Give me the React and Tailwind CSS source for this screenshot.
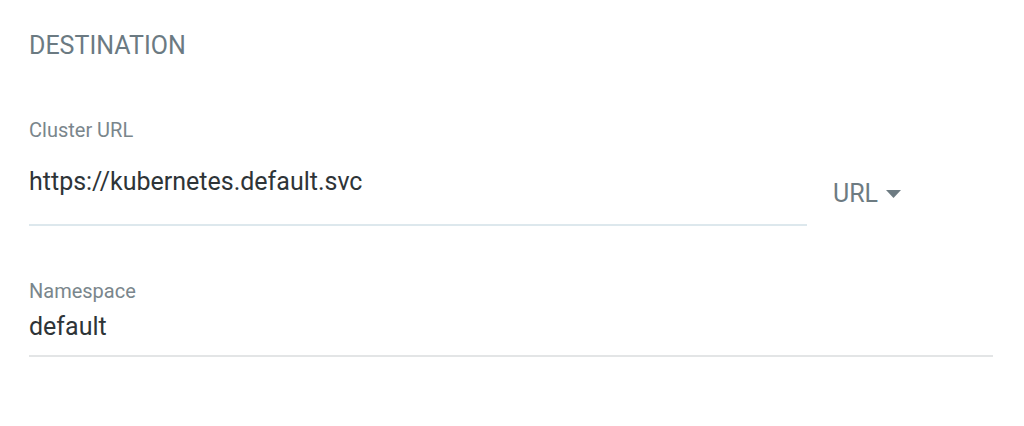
import React, { useState } from "react";

export default function App() {
  const [server, setServer] = useState("https://kubernetes.default.svc");
  const [namespace, setNamespace] = useState("default");

  return (
    <div className="min-h-screen w-full bg-white font-['Roboto',sans-serif]">
      <div className="pl-[29px] pr-[31px] pt-[31px]">
        <h2 className="text-[25px] leading-[30px] text-[#6b7a82]">
          DESTINATION
        </h2>

        <div className="mt-[58px] flex items-start">
          <div className="w-[778px] flex flex-col">
            <label className="text-[20px] leading-[22px] text-[#7a868c]">
              Cluster URL
            </label>
            <input
              value={server}
              onChange={(e) => setServer(e.target.value)}
              className="mt-[25px] pb-[28px] h-[60px] text-[25px] leading-[30px] text-[#2e3437] outline-none border-b-2 border-[#dde8ed] bg-transparent"
            />
          </div>
          <button className="ml-[26px] mt-[60px] flex items-center gap-[8px] text-[25px] leading-[30px] text-[#6d7b82]">
            URL
            <svg width="15" height="8" viewBox="0 0 15 8">
              <path d="M0 0 L15 0 L7.5 8 Z" fill="#6d7b82" />
            </svg>
          </button>
        </div>

        <div className="mt-[54px] flex flex-col">
          <label className="text-[20px] leading-[22px] text-[#7a868c]">
            Namespace
          </label>
          <input
            value={namespace}
            onChange={(e) => setNamespace(e.target.value)}
            className="mt-[9px] pb-[14px] h-[46px] text-[25px] leading-[30px] text-[#2e3437] outline-none border-b-2 border-[#e3e5e6] bg-transparent"
          />
        </div>
      </div>
    </div>
  );
}
